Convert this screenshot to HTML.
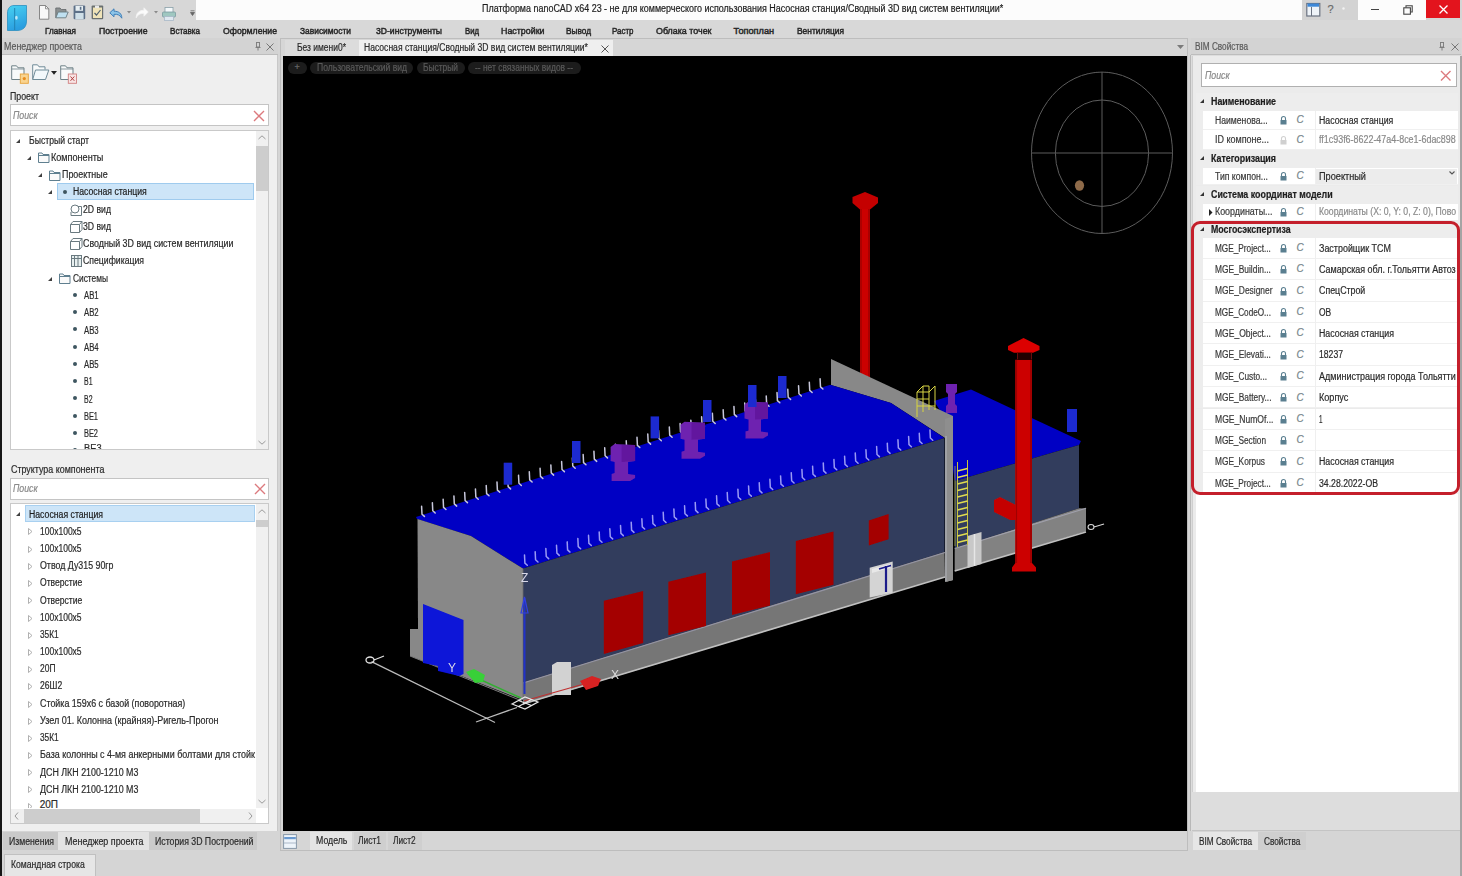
<!DOCTYPE html>
<html><head><meta charset="utf-8">
<style>
*{box-sizing:border-box;margin:0;padding:0}
html,body{width:1462px;height:876px;overflow:hidden;background:#d5d5d5;font-family:"Liberation Sans",sans-serif;color:#333}
.a{position:absolute}
.t{position:absolute;white-space:nowrap;line-height:1;transform-origin:0 50%;-webkit-text-stroke:0.2px currentColor}
svg{position:absolute;overflow:visible}
</style></head><body><div id="wrap" style="position:absolute;left:0;top:0;width:1462px;height:876px">
<div class="a" style="left:0px;top:0px;width:196px;height:20px;background:#d7d7d7;"></div>
<div class="a" style="left:196px;top:0px;width:1106px;height:20px;background:#fcfcfc;"></div>
<div class="a" style="left:1302px;top:0px;width:56px;height:20px;background:#d3d3d3;"></div>
<div class="a" style="left:1358px;top:0px;width:68px;height:20px;background:#fcfcfc;"></div>
<div class="a" style="left:1426px;top:0px;width:34px;height:18px;background:#e3141d;"></div>
<div class="a" style="left:0px;top:20px;width:1462px;height:18px;background:#d8d8d8;"></div>
<div class="a" style="left:0px;top:0px;width:2px;height:876px;background:#161616;"></div>
<div class="a" style="left:2px;top:38px;width:276px;height:17px;background:#d3d3d3;"></div>
<div class="a" style="left:2px;top:53.5px;width:276px;height:1.5px;background:#bdbdbd;"></div>
<div class="a" style="left:2px;top:55px;width:275px;height:776px;background:#efefef;"></div>
<div class="a" style="left:277px;top:55px;width:1px;height:776px;background:#c8c8c8;"></div>
<div class="a" style="left:9.5px;top:104px;width:259.0px;height:22px;background:#fff;border:1px solid #c4c4c4;"></div>
<div class="a" style="left:9.5px;top:129.5px;width:259px;height:320.5px;background:#fff;border:1px solid #c9c9c9;"></div>
<div class="a" style="left:256px;top:131px;width:12px;height:318px;background:#f0f0f0;"></div>
<div class="a" style="left:256px;top:145.5px;width:12px;height:45px;background:#cdcdcd;"></div>
<div class="a" style="left:9.5px;top:478px;width:259.0px;height:22px;background:#fff;border:1px solid #c4c4c4;"></div>
<div class="a" style="left:9.5px;top:503px;width:259px;height:321px;background:#fff;border:1px solid #c9c9c9;"></div>
<div class="a" style="left:256px;top:504px;width:12px;height:304px;background:#f0f0f0;"></div>
<div class="a" style="left:256px;top:519.5px;width:12px;height:7.5px;background:#cdcdcd;"></div>
<div class="a" style="left:10.5px;top:809px;width:245.5px;height:14px;background:#f0f0f0;"></div>
<div class="a" style="left:23.5px;top:809px;width:176px;height:14px;background:#cdcdcd;"></div>
<div class="a" style="left:280px;top:38px;width:908px;height:813px;background:#d6d6d6;border:1px solid #bdbdbd;"></div>
<div class="a" style="left:285px;top:39.5px;width:74px;height:16.5px;background:#dcdcdc;"></div>
<div class="a" style="left:359px;top:39.5px;width:253.5px;height:16.5px;background:#efefef;"></div>
<div class="a" style="left:283px;top:56px;width:904px;height:775px;background:#000;"></div>
<div class="a" style="left:309.7px;top:832px;width:42.7px;height:18px;background:#e4e4e4;"></div>
<div class="a" style="left:353.8px;top:832px;width:32.4px;height:18px;background:#cfcfcf;"></div>
<div class="a" style="left:387.6px;top:832px;width:34px;height:18px;background:#cfcfcf;"></div>
<div class="a" style="left:1191px;top:38px;width:270px;height:17px;background:#d3d3d3;"></div>
<div class="a" style="left:1191px;top:53.5px;width:270px;height:1.5px;background:#bdbdbd;"></div>
<div class="a" style="left:1190px;top:55px;width:271px;height:776px;background:#dddddd;border-left:1px solid #b8b8b8;"></div>
<div class="a" style="left:1192px;top:56px;width:268px;height:736px;background:#ebebeb;border-left:1px solid #cfcfcf;"></div>
<div class="a" style="left:1195.5px;top:493px;width:262.5px;height:299px;background:#fff;"></div>
<div class="a" style="left:1200.5px;top:62.5px;width:256px;height:24px;background:#fff;border:1.5px solid #b0b0b0;"></div>
<div class="a" style="left:1460px;top:56px;width:2px;height:820px;background:#a4a4a4;"></div>
<div class="a" style="left:1192px;top:830px;width:268px;height:1px;background:#c4c4c4;"></div>
<div class="a" style="left:3px;top:832px;width:55px;height:18px;background:#c9c9c9;"></div>
<div class="a" style="left:58px;top:832px;width:90.5px;height:18px;background:#e3e3e3;"></div>
<div class="a" style="left:148.5px;top:832px;width:108.5px;height:18px;background:#cacaca;"></div>
<div class="a" style="left:4px;top:853.5px;width:91.5px;height:23px;background:#e6e6e6;border:1px solid #c0c0c0;"></div>
<div class="a" style="left:1193.3px;top:832px;width:64.7px;height:18px;background:#e6e6e6;"></div>
<div class="a" style="left:1258px;top:832px;width:48px;height:18px;background:#cfcfcf;"></div>
<svg style="left:16.4px;top:138.7px" width="4" height="4"><polygon points="4,0 4,4 0,4" fill="#404040"/></svg>
<svg style="left:27.0px;top:156.0px" width="4" height="4"><polygon points="4,0 4,4 0,4" fill="#404040"/></svg>
<svg style="left:38px;top:152px" width="12" height="11"><path d="M0.5,10.5 V1 H4 L5,2.5 H11 V10.5 Z M0.5,3.5 H11" fill="#fafafa" stroke="#5f7f8f" stroke-width="1"/></svg>
<svg style="left:37.8px;top:173.0px" width="4" height="4"><polygon points="4,0 4,4 0,4" fill="#404040"/></svg>
<svg style="left:48.5px;top:169.5px" width="12" height="11"><path d="M0.5,10.5 V1 H4 L5,2.5 H11 V10.5 Z M0.5,3.5 H11" fill="#fafafa" stroke="#5f7f8f" stroke-width="1"/></svg>
<svg style="left:48.0px;top:190.0px" width="4" height="4"><polygon points="4,0 4,4 0,4" fill="#404040"/></svg>
<div class="a" style="left:57.2px;top:182.5px;width:197px;height:17.5px;background:#cde5f8;border:1px solid #9fcbee;"></div>
<svg style="left:63px;top:189.7px" width="4" height="4"><circle cx="2" cy="2" r="2" fill="#3e5660"/></svg>
<svg style="left:69.5px;top:204px" width="13" height="12"><circle cx="5" cy="5" r="4" fill="#fff" stroke="#6a7a80"/><path d="M1,8 V11.5 H11.5 V2.5 H8" fill="none" stroke="#6a7a80"/></svg>
<svg style="left:69.5px;top:221px" width="13" height="12"><path d="M0.5,3.5 H9.5 V11.5 H0.5 Z M0.5,3.5 L3,0.5 H12 V8.5 L9.5,11.5 M9.5,3.5 L12,0.5" fill="#fff" stroke="#6a7a80"/></svg>
<svg style="left:69.5px;top:238px" width="13" height="12"><path d="M0.5,3.5 H9.5 V11.5 H0.5 Z M0.5,3.5 L3,0.5 H12 V8.5 L9.5,11.5 M9.5,3.5 L12,0.5" fill="#fff" stroke="#6a7a80"/></svg>
<svg style="left:70.5px;top:255px" width="11" height="12"><rect x="0.5" y="0.5" width="10" height="11" fill="#e8f0f0" stroke="#6a7a80"/><path d="M3.5,0.5 V11.5 M7,0.5 V11.5 M0.5,3.5 H10.5" stroke="#6a7a80"/></svg>
<svg style="left:48.0px;top:276.5px" width="4" height="4"><polygon points="4,0 4,4 0,4" fill="#404040"/></svg>
<svg style="left:59px;top:273px" width="12" height="11"><path d="M0.5,10.5 V1 H4 L5,2.5 H11 V10.5 Z M0.5,3.5 H11" fill="#fafafa" stroke="#5f7f8f" stroke-width="1"/></svg>
<svg style="left:73.4px;top:293.3px" width="4" height="4"><circle cx="2" cy="2" r="2" fill="#3e5660"/></svg>
<svg style="left:73.4px;top:310.3px" width="4" height="4"><circle cx="2" cy="2" r="2" fill="#3e5660"/></svg>
<svg style="left:73.4px;top:327.4px" width="4" height="4"><circle cx="2" cy="2" r="2" fill="#3e5660"/></svg>
<svg style="left:73.4px;top:344.6px" width="4" height="4"><circle cx="2" cy="2" r="2" fill="#3e5660"/></svg>
<svg style="left:73.4px;top:361.6px" width="4" height="4"><circle cx="2" cy="2" r="2" fill="#3e5660"/></svg>
<svg style="left:73.4px;top:379px" width="4" height="4"><circle cx="2" cy="2" r="2" fill="#3e5660"/></svg>
<svg style="left:73.4px;top:396.4px" width="4" height="4"><circle cx="2" cy="2" r="2" fill="#3e5660"/></svg>
<svg style="left:73.4px;top:413.6px" width="4" height="4"><circle cx="2" cy="2" r="2" fill="#3e5660"/></svg>
<svg style="left:73.4px;top:431px" width="4" height="4"><circle cx="2" cy="2" r="2" fill="#3e5660"/></svg>
<div class="a" style="left:10px;top:443px;width:245px;height:5.5px;overflow:hidden"><svg style="left:63.4px;top:4.6px" width="4" height="4"><circle cx="2" cy="2" r="2" fill="#3e5660"/></svg><div class="t" style="left:73.5px;top:1.3px;font-size:10px;color:#2b2b2b;transform:scaleX(0.93)">ВЕ3</div></div>
<svg style="left:258px;top:135px" width="8" height="5"><path d="M0.5,4 L4,0.8 L7.5,4" fill="none" stroke="#9a9a9a"/></svg>
<svg style="left:258px;top:440px" width="8" height="5"><path d="M0.5,1 L4,4.2 L7.5,1" fill="none" stroke="#9a9a9a"/></svg>
<svg style="left:253.2px;top:109.6px" width="12" height="12"><path d="M1,1 L11,11 M11,1 L1,11" stroke="#dc7a7e" stroke-width="1.4"/></svg>
<svg style="left:253.5px;top:483px" width="12" height="12"><path d="M1,1 L11,11 M11,1 L1,11" stroke="#dc7a7e" stroke-width="1.4"/></svg>
<svg style="left:15.899999999999999px;top:511.79999999999995px" width="4" height="4"><polygon points="4,0 4,4 0,4" fill="#404040"/></svg>
<div class="a" style="left:25.2px;top:504.6px;width:229.5px;height:17px;background:#cde5f8;border:1px solid #a8d0f0;"></div>
<svg style="left:27.5px;top:528.3px" width="5" height="7"><polygon points="0.5,0.5 4,3.5 0.5,6.5" fill="none" stroke="#a8a8a8" stroke-width="0.9"/></svg>
<svg style="left:27.5px;top:545.5px" width="5" height="7"><polygon points="0.5,0.5 4,3.5 0.5,6.5" fill="none" stroke="#a8a8a8" stroke-width="0.9"/></svg>
<svg style="left:27.5px;top:562.8px" width="5" height="7"><polygon points="0.5,0.5 4,3.5 0.5,6.5" fill="none" stroke="#a8a8a8" stroke-width="0.9"/></svg>
<svg style="left:27.5px;top:579.8px" width="5" height="7"><polygon points="0.5,0.5 4,3.5 0.5,6.5" fill="none" stroke="#a8a8a8" stroke-width="0.9"/></svg>
<svg style="left:27.5px;top:597.3px" width="5" height="7"><polygon points="0.5,0.5 4,3.5 0.5,6.5" fill="none" stroke="#a8a8a8" stroke-width="0.9"/></svg>
<svg style="left:27.5px;top:614.6px" width="5" height="7"><polygon points="0.5,0.5 4,3.5 0.5,6.5" fill="none" stroke="#a8a8a8" stroke-width="0.9"/></svg>
<svg style="left:27.5px;top:631.5px" width="5" height="7"><polygon points="0.5,0.5 4,3.5 0.5,6.5" fill="none" stroke="#a8a8a8" stroke-width="0.9"/></svg>
<svg style="left:27.5px;top:648.7px" width="5" height="7"><polygon points="0.5,0.5 4,3.5 0.5,6.5" fill="none" stroke="#a8a8a8" stroke-width="0.9"/></svg>
<svg style="left:27.5px;top:665.7px" width="5" height="7"><polygon points="0.5,0.5 4,3.5 0.5,6.5" fill="none" stroke="#a8a8a8" stroke-width="0.9"/></svg>
<svg style="left:27.5px;top:683px" width="5" height="7"><polygon points="0.5,0.5 4,3.5 0.5,6.5" fill="none" stroke="#a8a8a8" stroke-width="0.9"/></svg>
<svg style="left:27.5px;top:700.8px" width="5" height="7"><polygon points="0.5,0.5 4,3.5 0.5,6.5" fill="none" stroke="#a8a8a8" stroke-width="0.9"/></svg>
<svg style="left:27.5px;top:717.8px" width="5" height="7"><polygon points="0.5,0.5 4,3.5 0.5,6.5" fill="none" stroke="#a8a8a8" stroke-width="0.9"/></svg>
<svg style="left:27.5px;top:734.8px" width="5" height="7"><polygon points="0.5,0.5 4,3.5 0.5,6.5" fill="none" stroke="#a8a8a8" stroke-width="0.9"/></svg>
<svg style="left:27.5px;top:751.8px" width="5" height="7"><polygon points="0.5,0.5 4,3.5 0.5,6.5" fill="none" stroke="#a8a8a8" stroke-width="0.9"/></svg>
<svg style="left:27.5px;top:769.2px" width="5" height="7"><polygon points="0.5,0.5 4,3.5 0.5,6.5" fill="none" stroke="#a8a8a8" stroke-width="0.9"/></svg>
<svg style="left:27.5px;top:786.2px" width="5" height="7"><polygon points="0.5,0.5 4,3.5 0.5,6.5" fill="none" stroke="#a8a8a8" stroke-width="0.9"/></svg>
<div class="a" style="left:10px;top:799px;width:245px;height:9px;overflow:hidden"><svg style="left:17.5px;top:3.7px" width="5" height="7"><polygon points="0.5,0.5 4,3.5 0.5,6.5" fill="none" stroke="#a8a8a8" stroke-width="0.9"/></svg><div class="t" style="left:29.7px;top:1.4px;font-size:10px;color:#2b2b2b">20П</div></div>
<svg style="left:258px;top:509px" width="8" height="5"><path d="M0.5,4 L4,0.8 L7.5,4" fill="none" stroke="#9a9a9a"/></svg>
<svg style="left:258px;top:799px" width="8" height="5"><path d="M0.5,1 L4,4.2 L7.5,1" fill="none" stroke="#9a9a9a"/></svg>
<svg style="left:14px;top:812px" width="5" height="8"><path d="M4,0.5 L1,4 L4,7.5" fill="none" stroke="#9a9a9a"/></svg>
<svg style="left:248px;top:812px" width="5" height="8"><path d="M1,0.5 L4,4 L1,7.5" fill="none" stroke="#9a9a9a"/></svg>
<div class="a" style="left:1196px;top:92.9px;width:262px;height:18px;background:#ededed;"></div>
<svg style="left:1199.5px;top:99.4px" width="4" height="4"><polygon points="4,0 4,4 0,4" fill="#333"/></svg>
<div class="a" style="left:1196px;top:111px;width:7px;height:19px;background:#ededed;"></div>
<div class="a" style="left:1203px;top:111px;width:255px;height:19px;background:#ffffff;border-bottom:1px solid #f0f0f0;"></div>
<div class="a" style="left:1314.5px;top:111px;width:1px;height:19px;background:#efefef;"></div>
<svg style="left:1280px;top:116.0px" width="7" height="9"><path d="M1.5,4 V2.5 A2,2 0 0 1 5.5,2.5 V4" fill="none" stroke="#5a7f90" stroke-width="1.1"/><rect x="0.5" y="4" width="6" height="4.5" fill="#5a7f90"/></svg>
<div class="t" style="left:1296.5px;top:115.2px;font-size:10px;font-style:italic;color:#74848a">C</div>
<div class="a" style="left:1196px;top:130px;width:7px;height:20px;background:#ededed;"></div>
<div class="a" style="left:1203px;top:130px;width:255px;height:20px;background:#ffffff;border-bottom:1px solid #f0f0f0;"></div>
<div class="a" style="left:1314.5px;top:130px;width:1px;height:20px;background:#efefef;"></div>
<svg style="left:1280px;top:135.5px" width="7" height="9"><path d="M1.5,4 V2.5 A2,2 0 0 1 5.5,2.5 V4" fill="none" stroke="#d0d0d0" stroke-width="1.1"/><rect x="0.5" y="4" width="6" height="4.5" fill="#d0d0d0"/></svg>
<div class="t" style="left:1296.5px;top:134.7px;font-size:10px;font-style:italic;color:#74848a">C</div>
<div class="a" style="left:1196px;top:149.7px;width:262px;height:18px;background:#ededed;"></div>
<svg style="left:1199.5px;top:156.2px" width="4" height="4"><polygon points="4,0 4,4 0,4" fill="#333"/></svg>
<div class="a" style="left:1196px;top:167.5px;width:7px;height:17.5px;background:#ededed;"></div>
<div class="a" style="left:1203px;top:167.5px;width:255px;height:17.5px;background:#ffffff;border-bottom:1px solid #f0f0f0;"></div>
<div class="a" style="left:1314.5px;top:167.5px;width:1px;height:17.5px;background:#efefef;"></div>
<div class="a" style="left:1315.5px;top:168.5px;width:141.5px;height:15.5px;background:#ececec;"></div>
<svg style="left:1280px;top:171.75px" width="7" height="9"><path d="M1.5,4 V2.5 A2,2 0 0 1 5.5,2.5 V4" fill="none" stroke="#5a7f90" stroke-width="1.1"/><rect x="0.5" y="4" width="6" height="4.5" fill="#5a7f90"/></svg>
<div class="t" style="left:1296.5px;top:170.95px;font-size:10px;font-style:italic;color:#74848a">C</div>
<svg style="left:1448.5px;top:171px" width="6" height="4"><path d="M0.5,0.5 L3,3 L5.5,0.5" fill="none" stroke="#555" stroke-width="1.1"/></svg>
<div class="a" style="left:1196px;top:185.5px;width:262px;height:18px;background:#ededed;"></div>
<svg style="left:1199.5px;top:192.0px" width="4" height="4"><polygon points="4,0 4,4 0,4" fill="#333"/></svg>
<div class="a" style="left:1196px;top:203.5px;width:7px;height:17.0px;background:#ededed;"></div>
<div class="a" style="left:1203px;top:203.5px;width:255px;height:17.0px;background:#ffffff;border-bottom:1px solid #f0f0f0;"></div>
<div class="a" style="left:1314.5px;top:203.5px;width:1px;height:17.0px;background:#efefef;"></div>
<svg style="left:1208.5px;top:208.5px" width="4" height="7"><polygon points="0,0 3.5,3.5 0,7" fill="#222"/></svg>
<svg style="left:1280px;top:207.5px" width="7" height="9"><path d="M1.5,4 V2.5 A2,2 0 0 1 5.5,2.5 V4" fill="none" stroke="#5a7f90" stroke-width="1.1"/><rect x="0.5" y="4" width="6" height="4.5" fill="#5a7f90"/></svg>
<div class="t" style="left:1296.5px;top:206.7px;font-size:10px;font-style:italic;color:#74848a">C</div>
<div class="a" style="left:1196px;top:220.4px;width:262px;height:18px;background:#ededed;"></div>
<svg style="left:1199.5px;top:226.9px" width="4" height="4"><polygon points="4,0 4,4 0,4" fill="#333"/></svg>
<div class="a" style="left:1196px;top:237.7px;width:7px;height:21.350000000000023px;background:#ededed;"></div>
<div class="a" style="left:1203px;top:237.7px;width:255px;height:21.350000000000023px;background:#ffffff;border-bottom:1px solid #f0f0f0;"></div>
<div class="a" style="left:1314.5px;top:237.7px;width:1px;height:21.350000000000023px;background:#efefef;"></div>
<svg style="left:1280px;top:243.875px" width="7" height="9"><path d="M1.5,4 V2.5 A2,2 0 0 1 5.5,2.5 V4" fill="none" stroke="#5a7f90" stroke-width="1.1"/><rect x="0.5" y="4" width="6" height="4.5" fill="#5a7f90"/></svg>
<div class="t" style="left:1296.5px;top:243.075px;font-size:10px;font-style:italic;color:#74848a">C</div>
<div class="a" style="left:1196px;top:259.05px;width:7px;height:21.350000000000023px;background:#ededed;"></div>
<div class="a" style="left:1203px;top:259.05px;width:255px;height:21.350000000000023px;background:#ffffff;border-bottom:1px solid #f0f0f0;"></div>
<div class="a" style="left:1314.5px;top:259.05px;width:1px;height:21.350000000000023px;background:#efefef;"></div>
<svg style="left:1280px;top:265.225px" width="7" height="9"><path d="M1.5,4 V2.5 A2,2 0 0 1 5.5,2.5 V4" fill="none" stroke="#5a7f90" stroke-width="1.1"/><rect x="0.5" y="4" width="6" height="4.5" fill="#5a7f90"/></svg>
<div class="t" style="left:1296.5px;top:264.425px;font-size:10px;font-style:italic;color:#74848a">C</div>
<div class="a" style="left:1196px;top:280.4px;width:7px;height:21.350000000000023px;background:#ededed;"></div>
<div class="a" style="left:1203px;top:280.4px;width:255px;height:21.350000000000023px;background:#ffffff;border-bottom:1px solid #f0f0f0;"></div>
<div class="a" style="left:1314.5px;top:280.4px;width:1px;height:21.350000000000023px;background:#efefef;"></div>
<svg style="left:1280px;top:286.575px" width="7" height="9"><path d="M1.5,4 V2.5 A2,2 0 0 1 5.5,2.5 V4" fill="none" stroke="#5a7f90" stroke-width="1.1"/><rect x="0.5" y="4" width="6" height="4.5" fill="#5a7f90"/></svg>
<div class="t" style="left:1296.5px;top:285.775px;font-size:10px;font-style:italic;color:#74848a">C</div>
<div class="a" style="left:1196px;top:301.75px;width:7px;height:21.350000000000023px;background:#ededed;"></div>
<div class="a" style="left:1203px;top:301.75px;width:255px;height:21.350000000000023px;background:#ffffff;border-bottom:1px solid #f0f0f0;"></div>
<div class="a" style="left:1314.5px;top:301.75px;width:1px;height:21.350000000000023px;background:#efefef;"></div>
<svg style="left:1280px;top:307.925px" width="7" height="9"><path d="M1.5,4 V2.5 A2,2 0 0 1 5.5,2.5 V4" fill="none" stroke="#5a7f90" stroke-width="1.1"/><rect x="0.5" y="4" width="6" height="4.5" fill="#5a7f90"/></svg>
<div class="t" style="left:1296.5px;top:307.125px;font-size:10px;font-style:italic;color:#74848a">C</div>
<div class="a" style="left:1196px;top:323.1px;width:7px;height:21.350000000000023px;background:#ededed;"></div>
<div class="a" style="left:1203px;top:323.1px;width:255px;height:21.350000000000023px;background:#ffffff;border-bottom:1px solid #f0f0f0;"></div>
<div class="a" style="left:1314.5px;top:323.1px;width:1px;height:21.350000000000023px;background:#efefef;"></div>
<svg style="left:1280px;top:329.27500000000003px" width="7" height="9"><path d="M1.5,4 V2.5 A2,2 0 0 1 5.5,2.5 V4" fill="none" stroke="#5a7f90" stroke-width="1.1"/><rect x="0.5" y="4" width="6" height="4.5" fill="#5a7f90"/></svg>
<div class="t" style="left:1296.5px;top:328.475px;font-size:10px;font-style:italic;color:#74848a">C</div>
<div class="a" style="left:1196px;top:344.45px;width:7px;height:21.350000000000023px;background:#ededed;"></div>
<div class="a" style="left:1203px;top:344.45px;width:255px;height:21.350000000000023px;background:#ffffff;border-bottom:1px solid #f0f0f0;"></div>
<div class="a" style="left:1314.5px;top:344.45px;width:1px;height:21.350000000000023px;background:#efefef;"></div>
<svg style="left:1280px;top:350.625px" width="7" height="9"><path d="M1.5,4 V2.5 A2,2 0 0 1 5.5,2.5 V4" fill="none" stroke="#5a7f90" stroke-width="1.1"/><rect x="0.5" y="4" width="6" height="4.5" fill="#5a7f90"/></svg>
<div class="t" style="left:1296.5px;top:349.825px;font-size:10px;font-style:italic;color:#74848a">C</div>
<div class="a" style="left:1196px;top:365.8px;width:7px;height:21.350000000000023px;background:#ededed;"></div>
<div class="a" style="left:1203px;top:365.8px;width:255px;height:21.350000000000023px;background:#ffffff;border-bottom:1px solid #f0f0f0;"></div>
<div class="a" style="left:1314.5px;top:365.8px;width:1px;height:21.350000000000023px;background:#efefef;"></div>
<svg style="left:1280px;top:371.975px" width="7" height="9"><path d="M1.5,4 V2.5 A2,2 0 0 1 5.5,2.5 V4" fill="none" stroke="#5a7f90" stroke-width="1.1"/><rect x="0.5" y="4" width="6" height="4.5" fill="#5a7f90"/></svg>
<div class="t" style="left:1296.5px;top:371.175px;font-size:10px;font-style:italic;color:#74848a">C</div>
<div class="a" style="left:1196px;top:387.15px;width:7px;height:21.350000000000023px;background:#ededed;"></div>
<div class="a" style="left:1203px;top:387.15px;width:255px;height:21.350000000000023px;background:#ffffff;border-bottom:1px solid #f0f0f0;"></div>
<div class="a" style="left:1314.5px;top:387.15px;width:1px;height:21.350000000000023px;background:#efefef;"></div>
<svg style="left:1280px;top:393.325px" width="7" height="9"><path d="M1.5,4 V2.5 A2,2 0 0 1 5.5,2.5 V4" fill="none" stroke="#5a7f90" stroke-width="1.1"/><rect x="0.5" y="4" width="6" height="4.5" fill="#5a7f90"/></svg>
<div class="t" style="left:1296.5px;top:392.525px;font-size:10px;font-style:italic;color:#74848a">C</div>
<div class="a" style="left:1196px;top:408.5px;width:7px;height:21.350000000000023px;background:#ededed;"></div>
<div class="a" style="left:1203px;top:408.5px;width:255px;height:21.350000000000023px;background:#ffffff;border-bottom:1px solid #f0f0f0;"></div>
<div class="a" style="left:1314.5px;top:408.5px;width:1px;height:21.350000000000023px;background:#efefef;"></div>
<svg style="left:1280px;top:414.675px" width="7" height="9"><path d="M1.5,4 V2.5 A2,2 0 0 1 5.5,2.5 V4" fill="none" stroke="#5a7f90" stroke-width="1.1"/><rect x="0.5" y="4" width="6" height="4.5" fill="#5a7f90"/></svg>
<div class="t" style="left:1296.5px;top:413.875px;font-size:10px;font-style:italic;color:#74848a">C</div>
<div class="a" style="left:1196px;top:429.85px;width:7px;height:21.350000000000023px;background:#ededed;"></div>
<div class="a" style="left:1203px;top:429.85px;width:255px;height:21.350000000000023px;background:#ffffff;border-bottom:1px solid #f0f0f0;"></div>
<div class="a" style="left:1314.5px;top:429.85px;width:1px;height:21.350000000000023px;background:#efefef;"></div>
<svg style="left:1280px;top:436.02500000000003px" width="7" height="9"><path d="M1.5,4 V2.5 A2,2 0 0 1 5.5,2.5 V4" fill="none" stroke="#5a7f90" stroke-width="1.1"/><rect x="0.5" y="4" width="6" height="4.5" fill="#5a7f90"/></svg>
<div class="t" style="left:1296.5px;top:435.225px;font-size:10px;font-style:italic;color:#74848a">C</div>
<div class="a" style="left:1196px;top:451.2px;width:7px;height:21.350000000000023px;background:#ededed;"></div>
<div class="a" style="left:1203px;top:451.2px;width:255px;height:21.350000000000023px;background:#ffffff;border-bottom:1px solid #f0f0f0;"></div>
<div class="a" style="left:1314.5px;top:451.2px;width:1px;height:21.350000000000023px;background:#efefef;"></div>
<svg style="left:1280px;top:457.375px" width="7" height="9"><path d="M1.5,4 V2.5 A2,2 0 0 1 5.5,2.5 V4" fill="none" stroke="#5a7f90" stroke-width="1.1"/><rect x="0.5" y="4" width="6" height="4.5" fill="#5a7f90"/></svg>
<div class="t" style="left:1296.5px;top:456.575px;font-size:10px;font-style:italic;color:#74848a">C</div>
<div class="a" style="left:1196px;top:472.55px;width:7px;height:21.350000000000023px;background:#ededed;"></div>
<div class="a" style="left:1203px;top:472.55px;width:255px;height:21.350000000000023px;background:#ffffff;border-bottom:1px solid #f0f0f0;"></div>
<div class="a" style="left:1314.5px;top:472.55px;width:1px;height:21.350000000000023px;background:#efefef;"></div>
<svg style="left:1280px;top:478.725px" width="7" height="9"><path d="M1.5,4 V2.5 A2,2 0 0 1 5.5,2.5 V4" fill="none" stroke="#5a7f90" stroke-width="1.1"/><rect x="0.5" y="4" width="6" height="4.5" fill="#5a7f90"/></svg>
<div class="t" style="left:1296.5px;top:477.925px;font-size:10px;font-style:italic;color:#74848a">C</div>
<div class="a" style="left:1190.8px;top:220.5px;width:269.4px;height:274.8px;border:3.5px solid #c41f2b;border-radius:9px"></div>
<svg style="left:1439px;top:42px" width="6" height="9"><path d="M1,0.5 H5 M1.5,0.5 V5 H4.5 V0.5 M0.5,5.5 H5.5 M3,5.5 V8.5" fill="none" stroke="#777" stroke-width="0.9"/></svg>
<svg style="left:1450.5px;top:43px" width="8" height="8"><path d="M0.5,0.5 L7.5,7.5 M7.5,0.5 L0.5,7.5" stroke="#777" stroke-width="1"/></svg>
<svg style="left:254.5px;top:42px" width="6" height="9"><path d="M1,0.5 H5 M1.5,0.5 V5 H4.5 V0.5 M0.5,5.5 H5.5 M3,5.5 V8.5" fill="none" stroke="#777" stroke-width="0.9"/></svg>
<svg style="left:266px;top:43px" width="8" height="8"><path d="M0.5,0.5 L7.5,7.5 M7.5,0.5 L0.5,7.5" stroke="#777" stroke-width="1"/></svg>
<svg style="left:1440px;top:69.5px" width="11.5" height="11.5"><path d="M1,1 L10.5,10.5 M10.5,1 L1,10.5" stroke="#dc7a7e" stroke-width="1.4"/></svg>
<div class="a" style="left:283px;top:56px;width:904px;height:775px;overflow:hidden"><svg style="left:-283px;top:-56px" width="1462" height="876" viewBox="0 0 1462 876"><defs><linearGradient id="pg" x1="0" y1="0" x2="1" y2="0"><stop offset="0" stop-color="#a80404"/><stop offset="0.35" stop-color="#d40808"/><stop offset="0.7" stop-color="#c80606"/><stop offset="1" stop-color="#9a0404"/></linearGradient><filter id="sb" x="0" y="0" width="1462" height="876" filterUnits="userSpaceOnUse"><feGaussianBlur stdDeviation="0.55"/></filter></defs><g filter="url(#sb)"><rect x="283" y="56" width="904" height="775" fill="#000"/><polygon points="852.5,197 865,192 878,197.5 878,203 870,209.5 860,209.5 852.5,203" fill="#c40606" /><polygon points="860,209 870,209 870,378 860,378" fill="#cc0606" /><line x1="861" y1="209" x2="861" y2="378" stroke="#a00404" stroke-width="1.4" /><line x1="869" y1="209" x2="869" y2="378" stroke="#9a0404" stroke-width="1.4" /><polygon points="934,401 971,389.5 1081,441 1079,445 954.7,481 946,420" fill="#0000c4" /><polygon points="954.7,481 1079,445 1079,508.3 954.7,548.5" fill="#333d5d" /><polygon points="954.7,548.5 1079,508.3 1086,508.5 1086,531.6 954.7,571" fill="#828282" /><line x1="954.7" y1="548.5" x2="1086" y2="508.3" stroke="#a0a0ac" stroke-width="1.2" /><line x1="954.7" y1="571" x2="1086" y2="532" stroke="#c0c0c0" stroke-width="1.5" /><polygon points="946,384 957,384 957,392 955,394 955,404 957,406 957,413 946,413 946,406 948,404 948,394 946,392" fill="#6e22b0" /><polygon points="1067,409 1077,409 1077,432 1067,432" fill="#1a2ad0" /><polygon points="1015.3,359.8 1032,359.8 1032,563 1036,567.5 1036,571.5 1012,571.5 1012,567.5 1015.3,563" fill="#cc0606" /><line x1="1016.3" y1="360" x2="1016.3" y2="563" stroke="#a00404" stroke-width="1.6" /><line x1="1031" y1="360" x2="1031" y2="563" stroke="#980404" stroke-width="1.6" /><polygon points="994,500 1000,497 1016,505 1016,520 1010,520 994,512" fill="#c40606" /><polygon points="1023.5,338 1039.5,346 1039.5,350 1033,352.8 1014,352.8 1008,350 1008,346" fill="#dc0404" /><polygon points="1017,352.8 1032,352.8 1032,359.8 1017,359.8" fill="#220202" /><line x1="1017.5" y1="353" x2="1017.5" y2="359.5" stroke="#7a1010" stroke-width="0.8" /><line x1="1031.5" y1="353" x2="1031.5" y2="359.5" stroke="#7a1010" stroke-width="0.8" /><polygon points="967.5,536 981.5,532 981.5,564 967.5,568" fill="#c8c8c8" /><line x1="974.5" y1="534" x2="974.5" y2="566" stroke="#e6e6e6" stroke-width="1.5" /><line x1="957.5" y1="462" x2="957.5" y2="547" stroke="#c8c43a" stroke-width="1" /><line x1="967.5" y1="460" x2="967.5" y2="545" stroke="#c8c43a" stroke-width="1" /><line x1="957.5" y1="471.0" x2="967.5" y2="468.5" stroke="#e0dc50" stroke-width="1.6" /><line x1="957.5" y1="477.5" x2="967.5" y2="475.0" stroke="#e0dc50" stroke-width="1.6" /><line x1="957.5" y1="484.0" x2="967.5" y2="481.5" stroke="#e0dc50" stroke-width="1.6" /><line x1="957.5" y1="490.5" x2="967.5" y2="488.0" stroke="#e0dc50" stroke-width="1.6" /><line x1="957.5" y1="497.0" x2="967.5" y2="494.5" stroke="#e0dc50" stroke-width="1.6" /><line x1="957.5" y1="503.5" x2="967.5" y2="501.0" stroke="#e0dc50" stroke-width="1.6" /><line x1="957.5" y1="510.0" x2="967.5" y2="507.5" stroke="#e0dc50" stroke-width="1.6" /><line x1="957.5" y1="516.5" x2="967.5" y2="514.0" stroke="#e0dc50" stroke-width="1.6" /><line x1="957.5" y1="523.0" x2="967.5" y2="520.5" stroke="#e0dc50" stroke-width="1.6" /><line x1="957.5" y1="529.5" x2="967.5" y2="527.0" stroke="#e0dc50" stroke-width="1.6" /><line x1="957.5" y1="536.0" x2="967.5" y2="533.5" stroke="#e0dc50" stroke-width="1.6" /><line x1="957.5" y1="542.5" x2="967.5" y2="540.0" stroke="#e0dc50" stroke-width="1.6" /><line x1="955" y1="466" x2="955" y2="546" stroke="#a8a840" stroke-width="0.8" /><polygon points="831,359 953,416 953,580 945,582 945,438 891,403 831,385" fill="#888888" /><polygon points="945,419 953,416 953,580 945,582" fill="#8e8e8e" /><g stroke="#d8d440" stroke-width="1" fill="none"><path d="M917,417 V392 L923,386 H929 V410 M923,386 V412 M929,392 L935,386 V410 M917,392 H929 M917,399 H929 M917,406 H935"/></g><polygon points="416,517 829.5,385 831,385 891,403 944.5,438 523,568.5 471,536 417,519" fill="#0000c4" /><polygon points="523,568.5 944.5,438 944.5,552 523,682.5" fill="#333d5d" /><polygon points="523,682.5 944.5,552 945,577 523,704.5" fill="#767676" /><line x1="523" y1="683" x2="945" y2="552.5" stroke="#9494a4" stroke-width="1.3" /><line x1="523" y1="704" x2="945" y2="577" stroke="#c0c0c0" stroke-width="1.6" /><polygon points="417.5,519 471,536 523,568.5 523,700 410,656 410,629 418,629" fill="#888888" /><line x1="410" y1="656" x2="522" y2="701" stroke="#7a7a7a" stroke-width="1" /><line x1="523" y1="568.5" x2="523" y2="700" stroke="#6c6c6c" stroke-width="0.8" /><polygon points="423,604 463.5,620 463.5,674 459,676 438,671 438,666 423,663" fill="#0a12d8" /><polygon points="603.8,600.7 643.2,591 643.2,643 603.8,654" fill="#a40000" /><polygon points="668.3,581.8 706,572.4 706,625.9 668.3,635.3" fill="#a40000" /><polygon points="732,561.4 770,552 770,605.6 732,615.0" fill="#a40000" /><polygon points="795.8,541 833.5,531.5 833.5,584.7 795.8,594.2" fill="#a40000" /><polygon points="868.8,520.5 888.6,514 888.6,539.3 868.8,545.6" fill="#a40000" /><polygon points="869.7,567.7 892.7,561.4 892.7,592.8 869.7,597.5" fill="#d4d4d4" /><polygon points="872,569 890,564 890,568 872,573" fill="#e8e8e8" /><line x1="886" y1="566" x2="886" y2="592" stroke="#1a1a8a" stroke-width="2.2" /><line x1="879" y1="569" x2="891" y2="565.5" stroke="#1a1a8a" stroke-width="1.6" /><polygon points="945,438 953,434 953,580 945,582" fill="#8e8e8e" /><line x1="946" y1="436" x2="946" y2="581" stroke="#a4a6aa" stroke-width="1.6" /><polygon points="552,665 557,662 571,662 571,695 552,695" fill="#d2d2d2" /><path d="M421.6,506.21024 L422.0,514.21024 L424.40000000000003,516.41024" fill="none" stroke="#c8c8dc" stroke-width="1.5" stroke-linecap="round"/><path d="M432.37,502.768148 L432.77,510.768148 L435.17,512.968148" fill="none" stroke="#c8c8dc" stroke-width="1.5" stroke-linecap="round"/><path d="M443.14,499.326056 L443.53999999999996,507.326056 L445.94,509.526056" fill="none" stroke="#c8c8dc" stroke-width="1.5" stroke-linecap="round"/><path d="M453.90999999999997,495.883964 L454.30999999999995,503.883964 L456.71,506.083964" fill="none" stroke="#c8c8dc" stroke-width="1.5" stroke-linecap="round"/><path d="M464.67999999999995,492.441872 L465.0799999999999,500.441872 L467.47999999999996,502.641872" fill="none" stroke="#c8c8dc" stroke-width="1.5" stroke-linecap="round"/><path d="M475.44999999999993,488.99978000000004 L475.8499999999999,496.99978000000004 L478.24999999999994,499.19978000000003" fill="none" stroke="#c8c8dc" stroke-width="1.5" stroke-linecap="round"/><path d="M486.2199999999999,485.55768800000004 L486.6199999999999,493.55768800000004 L489.0199999999999,495.75768800000003" fill="none" stroke="#c8c8dc" stroke-width="1.5" stroke-linecap="round"/><path d="M496.9899999999999,482.11559600000004 L497.3899999999999,490.11559600000004 L499.7899999999999,492.315596" fill="none" stroke="#c8c8dc" stroke-width="1.5" stroke-linecap="round"/><path d="M507.7599999999999,478.67350400000004 L508.15999999999985,486.67350400000004 L510.5599999999999,488.873504" fill="none" stroke="#c8c8dc" stroke-width="1.5" stroke-linecap="round"/><path d="M518.5299999999999,475.23141200000003 L518.9299999999998,483.23141200000003 L521.3299999999998,485.431412" fill="none" stroke="#c8c8dc" stroke-width="1.5" stroke-linecap="round"/><path d="M529.2999999999998,471.78932000000003 L529.6999999999998,479.78932000000003 L532.0999999999998,481.98932" fill="none" stroke="#c8c8dc" stroke-width="1.5" stroke-linecap="round"/><path d="M540.0699999999998,468.3472280000001 L540.4699999999998,476.3472280000001 L542.8699999999998,478.5472280000001" fill="none" stroke="#c8c8dc" stroke-width="1.5" stroke-linecap="round"/><path d="M550.8399999999998,464.9051360000001 L551.2399999999998,472.9051360000001 L553.6399999999998,475.1051360000001" fill="none" stroke="#c8c8dc" stroke-width="1.5" stroke-linecap="round"/><path d="M561.6099999999998,461.4630440000001 L562.0099999999998,469.4630440000001 L564.4099999999997,471.66304400000007" fill="none" stroke="#c8c8dc" stroke-width="1.5" stroke-linecap="round"/><path d="M572.3799999999998,458.0209520000001 L572.7799999999997,466.0209520000001 L575.1799999999997,468.22095200000007" fill="none" stroke="#c8c8dc" stroke-width="1.5" stroke-linecap="round"/><path d="M583.1499999999997,454.5788600000001 L583.5499999999997,462.5788600000001 L585.9499999999997,464.77886000000007" fill="none" stroke="#c8c8dc" stroke-width="1.5" stroke-linecap="round"/><path d="M593.9199999999997,451.1367680000001 L594.3199999999997,459.1367680000001 L596.7199999999997,461.33676800000006" fill="none" stroke="#c8c8dc" stroke-width="1.5" stroke-linecap="round"/><path d="M604.6899999999997,447.6946760000001 L605.0899999999997,455.6946760000001 L607.4899999999997,457.89467600000006" fill="none" stroke="#c8c8dc" stroke-width="1.5" stroke-linecap="round"/><path d="M615.4599999999997,444.25258400000007 L615.8599999999997,452.25258400000007 L618.2599999999996,454.45258400000006" fill="none" stroke="#c8c8dc" stroke-width="1.5" stroke-linecap="round"/><path d="M626.2299999999997,440.8104920000001 L626.6299999999997,448.8104920000001 L629.0299999999996,451.0104920000001" fill="none" stroke="#c8c8dc" stroke-width="1.5" stroke-linecap="round"/><path d="M636.9999999999997,437.3684000000001 L637.3999999999996,445.3684000000001 L639.7999999999996,447.5684000000001" fill="none" stroke="#c8c8dc" stroke-width="1.5" stroke-linecap="round"/><path d="M647.7699999999996,433.9263080000001 L648.1699999999996,441.9263080000001 L650.5699999999996,444.1263080000001" fill="none" stroke="#c8c8dc" stroke-width="1.5" stroke-linecap="round"/><path d="M658.5399999999996,430.4842160000001 L658.9399999999996,438.4842160000001 L661.3399999999996,440.6842160000001" fill="none" stroke="#c8c8dc" stroke-width="1.5" stroke-linecap="round"/><path d="M669.3099999999996,427.0421240000001 L669.7099999999996,435.0421240000001 L672.1099999999996,437.2421240000001" fill="none" stroke="#c8c8dc" stroke-width="1.5" stroke-linecap="round"/><path d="M680.0799999999996,423.6000320000001 L680.4799999999996,431.6000320000001 L682.8799999999995,433.8000320000001" fill="none" stroke="#c8c8dc" stroke-width="1.5" stroke-linecap="round"/><path d="M690.8499999999996,420.15794000000017 L691.2499999999995,428.15794000000017 L693.6499999999995,430.35794000000016" fill="none" stroke="#c8c8dc" stroke-width="1.5" stroke-linecap="round"/><path d="M701.6199999999995,416.71584800000016 L702.0199999999995,424.71584800000016 L704.4199999999995,426.91584800000015" fill="none" stroke="#c8c8dc" stroke-width="1.5" stroke-linecap="round"/><path d="M712.3899999999995,413.27375600000016 L712.7899999999995,421.27375600000016 L715.1899999999995,423.47375600000015" fill="none" stroke="#c8c8dc" stroke-width="1.5" stroke-linecap="round"/><path d="M723.1599999999995,409.83166400000016 L723.5599999999995,417.83166400000016 L725.9599999999995,420.03166400000015" fill="none" stroke="#c8c8dc" stroke-width="1.5" stroke-linecap="round"/><path d="M733.9299999999995,406.38957200000016 L734.3299999999995,414.38957200000016 L736.7299999999994,416.58957200000015" fill="none" stroke="#c8c8dc" stroke-width="1.5" stroke-linecap="round"/><path d="M744.6999999999995,402.94748000000016 L745.0999999999995,410.94748000000016 L747.4999999999994,413.14748000000014" fill="none" stroke="#c8c8dc" stroke-width="1.5" stroke-linecap="round"/><path d="M755.4699999999995,399.50538800000015 L755.8699999999994,407.50538800000015 L758.2699999999994,409.70538800000014" fill="none" stroke="#c8c8dc" stroke-width="1.5" stroke-linecap="round"/><path d="M766.2399999999994,396.06329600000015 L766.6399999999994,404.06329600000015 L769.0399999999994,406.26329600000014" fill="none" stroke="#c8c8dc" stroke-width="1.5" stroke-linecap="round"/><path d="M777.0099999999994,392.6212040000002 L777.4099999999994,400.6212040000002 L779.8099999999994,402.8212040000002" fill="none" stroke="#c8c8dc" stroke-width="1.5" stroke-linecap="round"/><path d="M787.7799999999994,389.1791120000002 L788.1799999999994,397.1791120000002 L790.5799999999994,399.3791120000002" fill="none" stroke="#c8c8dc" stroke-width="1.5" stroke-linecap="round"/><path d="M798.5499999999994,385.7370200000002 L798.9499999999994,393.7370200000002 L801.3499999999993,395.9370200000002" fill="none" stroke="#c8c8dc" stroke-width="1.5" stroke-linecap="round"/><path d="M809.3199999999994,382.2949280000002 L809.7199999999993,390.2949280000002 L812.1199999999993,392.4949280000002" fill="none" stroke="#c8c8dc" stroke-width="1.5" stroke-linecap="round"/><path d="M820.0899999999993,378.85283600000025 L820.4899999999993,386.85283600000025 L822.8899999999993,389.05283600000024" fill="none" stroke="#c8c8dc" stroke-width="1.5" stroke-linecap="round"/><path d="M524.5,555.0374 L524.9,563.0374 L527.3,565.2374000000001" fill="none" stroke="#9a9af4" stroke-width="1.5" stroke-linecap="round"/><path d="M535.17,551.746772 L535.5699999999999,559.746772 L537.9699999999999,561.946772" fill="none" stroke="#9a9af4" stroke-width="1.5" stroke-linecap="round"/><path d="M545.8399999999999,548.456144 L546.2399999999999,556.456144 L548.6399999999999,558.656144" fill="none" stroke="#9a9af4" stroke-width="1.5" stroke-linecap="round"/><path d="M556.5099999999999,545.165516 L556.9099999999999,553.165516 L559.3099999999998,555.3655160000001" fill="none" stroke="#9a9af4" stroke-width="1.5" stroke-linecap="round"/><path d="M567.1799999999998,541.874888 L567.5799999999998,549.874888 L569.9799999999998,552.0748880000001" fill="none" stroke="#9a9af4" stroke-width="1.5" stroke-linecap="round"/><path d="M577.8499999999998,538.5842600000001 L578.2499999999998,546.5842600000001 L580.6499999999997,548.7842600000001" fill="none" stroke="#9a9af4" stroke-width="1.5" stroke-linecap="round"/><path d="M588.5199999999998,535.2936320000001 L588.9199999999997,543.2936320000001 L591.3199999999997,545.4936320000002" fill="none" stroke="#9a9af4" stroke-width="1.5" stroke-linecap="round"/><path d="M599.1899999999997,532.0030040000001 L599.5899999999997,540.0030040000001 L601.9899999999997,542.2030040000002" fill="none" stroke="#9a9af4" stroke-width="1.5" stroke-linecap="round"/><path d="M609.8599999999997,528.7123760000001 L610.2599999999996,536.7123760000001 L612.6599999999996,538.9123760000001" fill="none" stroke="#9a9af4" stroke-width="1.5" stroke-linecap="round"/><path d="M620.5299999999996,525.4217480000001 L620.9299999999996,533.4217480000001 L623.3299999999996,535.6217480000001" fill="none" stroke="#9a9af4" stroke-width="1.5" stroke-linecap="round"/><path d="M631.1999999999996,522.1311200000001 L631.5999999999996,530.1311200000001 L633.9999999999995,532.3311200000002" fill="none" stroke="#9a9af4" stroke-width="1.5" stroke-linecap="round"/><path d="M641.8699999999995,518.8404920000002 L642.2699999999995,526.8404920000002 L644.6699999999995,529.0404920000002" fill="none" stroke="#9a9af4" stroke-width="1.5" stroke-linecap="round"/><path d="M652.5399999999995,515.5498640000002 L652.9399999999995,523.5498640000002 L655.3399999999995,525.7498640000002" fill="none" stroke="#9a9af4" stroke-width="1.5" stroke-linecap="round"/><path d="M663.2099999999995,512.2592360000002 L663.6099999999994,520.2592360000002 L666.0099999999994,522.4592360000003" fill="none" stroke="#9a9af4" stroke-width="1.5" stroke-linecap="round"/><path d="M673.8799999999994,508.96860800000013 L674.2799999999994,516.9686080000001 L676.6799999999994,519.1686080000002" fill="none" stroke="#9a9af4" stroke-width="1.5" stroke-linecap="round"/><path d="M684.5499999999994,505.67798000000016 L684.9499999999994,513.6779800000002 L687.3499999999993,515.8779800000002" fill="none" stroke="#9a9af4" stroke-width="1.5" stroke-linecap="round"/><path d="M695.2199999999993,502.3873520000002 L695.6199999999993,510.3873520000002 L698.0199999999993,512.5873520000002" fill="none" stroke="#9a9af4" stroke-width="1.5" stroke-linecap="round"/><path d="M705.8899999999993,499.0967240000002 L706.2899999999993,507.0967240000002 L708.6899999999993,509.2967240000002" fill="none" stroke="#9a9af4" stroke-width="1.5" stroke-linecap="round"/><path d="M716.5599999999993,495.80609600000025 L716.9599999999992,503.80609600000025 L719.3599999999992,506.00609600000024" fill="none" stroke="#9a9af4" stroke-width="1.5" stroke-linecap="round"/><path d="M727.2299999999992,492.5154680000002 L727.6299999999992,500.5154680000002 L730.0299999999992,502.7154680000002" fill="none" stroke="#9a9af4" stroke-width="1.5" stroke-linecap="round"/><path d="M737.8999999999992,489.22484000000026 L738.2999999999992,497.22484000000026 L740.6999999999991,499.42484000000024" fill="none" stroke="#9a9af4" stroke-width="1.5" stroke-linecap="round"/><path d="M748.5699999999991,485.93421200000023 L748.9699999999991,493.93421200000023 L751.3699999999991,496.1342120000002" fill="none" stroke="#9a9af4" stroke-width="1.5" stroke-linecap="round"/><path d="M759.2399999999991,482.64358400000026 L759.6399999999991,490.64358400000026 L762.039999999999,492.84358400000025" fill="none" stroke="#9a9af4" stroke-width="1.5" stroke-linecap="round"/><path d="M769.9099999999991,479.3529560000003 L770.309999999999,487.3529560000003 L772.709999999999,489.5529560000003" fill="none" stroke="#9a9af4" stroke-width="1.5" stroke-linecap="round"/><path d="M780.579999999999,476.0623280000003 L780.979999999999,484.0623280000003 L783.379999999999,486.2623280000003" fill="none" stroke="#9a9af4" stroke-width="1.5" stroke-linecap="round"/><path d="M791.249999999999,472.7717000000003 L791.649999999999,480.7717000000003 L794.0499999999989,482.9717000000003" fill="none" stroke="#9a9af4" stroke-width="1.5" stroke-linecap="round"/><path d="M801.9199999999989,469.4810720000003 L802.3199999999989,477.4810720000003 L804.7199999999989,479.6810720000003" fill="none" stroke="#9a9af4" stroke-width="1.5" stroke-linecap="round"/><path d="M812.5899999999989,466.19044400000035 L812.9899999999989,474.19044400000035 L815.3899999999988,476.39044400000034" fill="none" stroke="#9a9af4" stroke-width="1.5" stroke-linecap="round"/><path d="M823.2599999999989,462.8998160000003 L823.6599999999988,470.8998160000003 L826.0599999999988,473.0998160000003" fill="none" stroke="#9a9af4" stroke-width="1.5" stroke-linecap="round"/><path d="M833.9299999999988,459.60918800000036 L834.3299999999988,467.60918800000036 L836.7299999999988,469.80918800000035" fill="none" stroke="#9a9af4" stroke-width="1.5" stroke-linecap="round"/><path d="M844.5999999999988,456.3185600000004 L844.9999999999987,464.3185600000004 L847.3999999999987,466.5185600000004" fill="none" stroke="#9a9af4" stroke-width="1.5" stroke-linecap="round"/><path d="M855.2699999999987,453.0279320000004 L855.6699999999987,461.0279320000004 L858.0699999999987,463.2279320000004" fill="none" stroke="#9a9af4" stroke-width="1.5" stroke-linecap="round"/><path d="M865.9399999999987,449.7373040000004 L866.3399999999987,457.7373040000004 L868.7399999999986,459.9373040000004" fill="none" stroke="#9a9af4" stroke-width="1.5" stroke-linecap="round"/><path d="M876.6099999999986,446.4466760000004 L877.0099999999986,454.4466760000004 L879.4099999999986,456.6466760000004" fill="none" stroke="#9a9af4" stroke-width="1.5" stroke-linecap="round"/><path d="M887.2799999999986,443.1560480000004 L887.6799999999986,451.1560480000004 L890.0799999999986,453.3560480000004" fill="none" stroke="#9a9af4" stroke-width="1.5" stroke-linecap="round"/><path d="M897.9499999999986,439.8654200000004 L898.3499999999985,447.8654200000004 L900.7499999999985,450.0654200000004" fill="none" stroke="#9a9af4" stroke-width="1.5" stroke-linecap="round"/><path d="M908.6199999999985,436.57479200000046 L909.0199999999985,444.57479200000046 L911.4199999999985,446.77479200000045" fill="none" stroke="#9a9af4" stroke-width="1.5" stroke-linecap="round"/><path d="M919.2899999999985,433.2841640000005 L919.6899999999985,441.2841640000005 L922.0899999999984,443.4841640000005" fill="none" stroke="#9a9af4" stroke-width="1.5" stroke-linecap="round"/><path d="M929.9599999999984,429.99353600000046 L930.3599999999984,437.99353600000046 L932.7599999999984,440.19353600000045" fill="none" stroke="#9a9af4" stroke-width="1.5" stroke-linecap="round"/><polygon points="610.6,447 614.6,444 635.1,445 635.1,461 628.1,462 628.1,474 635.1,475 635.1,478 630.1,481 611.6,481 611.6,474 614.6,473 614.6,462 610.6,461" fill="#6e22b0" /><polygon points="621.625,445 635.1,445 635.1,461 621.625,462" fill="#62189e" /><polygon points="680.5,424.7 684.5,421.7 705.0,422.7 705.0,438.7 698.0,439.7 698.0,451.7 705.0,452.7 705.0,455.7 700.0,458.7 681.5,458.7 681.5,451.7 684.5,450.7 684.5,439.7 680.5,438.7" fill="#6e22b0" /><polygon points="691.525,422.7 705.0,422.7 705.0,438.7 691.525,439.7" fill="#62189e" /><polygon points="744.5,404.6 748.5,401.6 768.0,402.6 768.0,418.6 761.0,419.6 761.0,431.6 768.0,432.6 768.0,435.6 763.0,438.6 745.5,438.6 745.5,431.6 748.5,430.6 748.5,419.6 744.5,418.6" fill="#6e22b0" /><polygon points="755.075,402.6 768.0,402.6 768.0,418.6 755.075,419.6" fill="#62189e" /><polygon points="503.7,462.7 512.2,462.7 512.2,484.7 503.7,484.7" fill="#1a2ad0" /><polygon points="572,441 580.5,441 580.5,463 572,463" fill="#1a2ad0" /><polygon points="650.6,416.4 659.1,416.4 659.1,438.4 650.6,438.4" fill="#1a2ad0" /><polygon points="703,400 711.5,400 711.5,422 703,422" fill="#1a2ad0" /><polygon points="748,385 756.5,385 756.5,407 748,407" fill="#1a2ad0" /><polygon points="778,376 786.5,376 786.5,398 778,398" fill="#1a2ad0" /><line x1="524.5" y1="598" x2="524.5" y2="694" stroke="#2432c8" stroke-width="2" /><polygon points="524.5,597 528,613 521,613" fill="none" stroke="#3040e0" stroke-width="1.2"/><line x1="524" y1="701" x2="598" y2="680" stroke="#c03030" stroke-width="1.2" /><polygon points="580,681 592,676 601,679 598,686 586,690" fill="#d82020" /><line x1="521" y1="698" x2="468" y2="674" stroke="#30b030" stroke-width="1.4" /><polygon points="466,672 474,669 485,675 483,682 475,683" fill="#38d038" /><line x1="371.5" y1="661.7" x2="488" y2="719" stroke="#bcbcbc" stroke-width="1.3" /><line x1="476" y1="722" x2="517" y2="707.5" stroke="#bcbcbc" stroke-width="1.3" /><line x1="485" y1="717.5" x2="495" y2="722.5" stroke="#bcbcbc" stroke-width="1.1" /><path d="M366,660 a4,3 0 1 0 8,0 a4,3 0 1 0 -8,0 M374,660 L384,656" fill="none" stroke="#e0e0e0" stroke-width="1.3"/><g fill="none" stroke="#e8e8e8" stroke-width="1.2"><path d="M512,704 L525,697 L538,702 L525,709 Z M518.5,700.5 L531.5,705.5 M531.5,699.5 L518.5,706.5"/></g><text x="521" y="582" fill="#d8d8e8" font-family="Liberation Sans" font-size="12">Z</text><text x="448" y="672" fill="#d8d8e8" font-family="Liberation Sans" font-size="12">Y</text><text x="611" y="679" fill="#d8d8d8" font-family="Liberation Sans" font-size="12">X</text><path d="M1088,527 a3,2.5 0 1 0 6,0 a3,2.5 0 1 0 -6,0 M1094,527 L1104,524" fill="none" stroke="#d8d8d8" stroke-width="1.1"/><g fill="none" stroke="#5c5c5c" stroke-width="1"><ellipse cx="1102" cy="152.8" rx="70.5" ry="80.7"/><ellipse cx="1102" cy="153.2" rx="46.6" ry="53.2"/><path d="M1031.5,153 H1172.5 M1102,72 V233.5"/></g><ellipse cx="1079.5" cy="185.5" rx="4.6" ry="5.2" fill="#8e6a48"/></g></svg></div>
<div class="a" style="left:288px;top:61.6px;width:18.69999999999999px;height:12.800000000000004px;background:#1c1c1c;border-radius:7px;"></div>
<div class="a" style="left:310px;top:61.6px;width:102.60000000000002px;height:12.800000000000004px;background:#1c1c1c;border-radius:7px;"></div>
<div class="a" style="left:417px;top:61.6px;width:48px;height:12.800000000000004px;background:#1c1c1c;border-radius:7px;"></div>
<div class="a" style="left:468px;top:61.6px;width:113px;height:12.800000000000004px;background:#1c1c1c;border-radius:7px;"></div>
<div class="t" style="left:294.5px;top:62.5px;font-size:9px;color:#6a6a6a">+</div>
<svg style="left:6px;top:4px" width="22" height="28"><defs><linearGradient id="lg" x1="0" y1="0" x2="0.3" y2="1"><stop offset="0" stop-color="#48d2f2"/><stop offset="1" stop-color="#2a9ee0"/></linearGradient></defs>
<path d="M8,1.5 H20.5 V17 C20.5,23 17,26.5 11,26.5 H1.5 V9 C1.5,4.5 4,1.5 8,1.5 Z" fill="url(#lg)" stroke="#2a8fc0" stroke-width="0.8"/>
<path d="M8.7,4 V26" stroke="#1f7fae" stroke-width="0.9"/><ellipse cx="10.4" cy="13.8" rx="1.3" ry="2" fill="#bfe8f8"/></svg>
<svg style="left:39px;top:5px" width="11" height="15"><path d="M0.5,0.5 H6.5 L9.8,3.8 V14.2 H0.5 Z" fill="#f8f8f8" stroke="#7c7c7c" stroke-width="0.9"/><path d="M6.5,0.5 V3.8 H9.8" fill="none" stroke="#7c7c7c" stroke-width="0.8"/></svg>
<svg style="left:54.5px;top:6.5px" width="14" height="12"><path d="M0.8,10.8 V1 H5 L6.3,2.5 H11 V5" fill="#8a8f90" stroke="#6a6e70" stroke-width="0.9"/><path d="M0.8,10.8 L3.2,5 H13.2 L10.8,10.8 Z" fill="#bfe0f0" stroke="#6a7a80" stroke-width="0.9"/></svg>
<svg style="left:72.7px;top:5px" width="13" height="15"><rect x="0.6" y="0.6" width="11.6" height="13.6" rx="1" fill="#5d7088"/><rect x="2.5" y="1" width="7.5" height="4.8" fill="#e6eef2"/><rect x="6.8" y="1.8" width="1.6" height="3" fill="#5d7088"/><rect x="2.3" y="8" width="8.3" height="6.2" fill="#cfdfe8"/></svg>
<svg style="left:91px;top:5px" width="13" height="15"><rect x="0.6" y="0.6" width="11.6" height="13.6" rx="1" fill="#6a7070"/><rect x="2" y="2.5" width="9" height="10.5" fill="#efe3b8"/><path d="M3.5,8 L5.5,10 L9.5,5" fill="none" stroke="#506070" stroke-width="1.2"/><rect x="4" y="0.6" width="4" height="2.5" fill="#e8e8e8"/></svg>
<svg style="left:109px;top:7.5px" width="14" height="11"><path d="M5,0.8 L0.8,4.8 L5,8.8 V6.3 C8.5,6 11,7 12.8,10.2 C12.8,5.5 9.8,3.2 5,3.2 Z" fill="#8cc4e8" stroke="#3e7eb8" stroke-width="1"/></svg>
<svg style="left:127px;top:11px" width="4" height="3"><polygon points="0,0 4,0 2,2.5" fill="#8a8a8a"/></svg>
<svg style="left:135px;top:7px" width="14" height="12"><path d="M9,0.8 L13.2,5 L9,9.2 V6.5 C5.5,6.3 3,7.3 1.2,10.8 C1.2,5.8 4.2,3.3 9,3.3 Z" fill="#fbfbfb" stroke="#f2f2f2" stroke-width="1"/></svg>
<svg style="left:153.5px;top:11px" width="4" height="3"><polygon points="0,0 4,0 2,2.5" fill="#8a8a8a"/></svg>
<svg style="left:161.5px;top:7px" width="14" height="14"><rect x="3" y="0.5" width="8" height="5" fill="#f4f8fa" stroke="#8aa0a8" stroke-width="0.8"/><rect x="0.5" y="5" width="13" height="5" rx="1" fill="#9fc7c0" stroke="#7a9aa0" stroke-width="0.8"/><rect x="2.5" y="9.5" width="9" height="4" fill="#dfe8f0" stroke="#a8b8c8" stroke-width="0.8"/></svg>
<svg style="left:190px;top:10px" width="5" height="7"><path d="M0.5,0.8 H4.5 M0.5,2.5 L2.5,5.5 L4.5,2.5 Z" fill="#666" stroke="#666" stroke-width="0.8"/></svg>
<svg style="left:1306px;top:2px" width="15" height="15"><rect x="0.8" y="1.5" width="13" height="12.5" fill="#eef3f8" stroke="#6a7280" stroke-width="1.2"/><rect x="1.5" y="1.5" width="11.5" height="3.2" fill="#3d88d8"/><path d="M5.5,5 V14" stroke="#6a7280" stroke-width="1"/></svg>
<div class="t" style="left:1327.5px;top:4px;font-size:11px;color:#6a6a6a">?</div>
<svg style="left:1342px;top:7px" width="3" height="3"><circle cx="1.5" cy="1.5" r="1.2" fill="#f2f2f2"/></svg>
<div class="a" style="left:1370.5px;top:9px;width:8px;height:1.2px;background:#444;"></div>
<svg style="left:1403px;top:4.5px" width="10" height="10"><path d="M3,2.5 V0.8 H9.2 V7 H7.5" fill="none" stroke="#444" stroke-width="1.1"/><rect x="0.8" y="2.8" width="6.6" height="6.4" fill="none" stroke="#444" stroke-width="1.1"/></svg>
<svg style="left:1438.5px;top:4.5px" width="9" height="9"><path d="M0.5,0.5 L8.5,8.5 M8.5,0.5 L0.5,8.5" stroke="#fff" stroke-width="1.3"/></svg>
<svg style="left:10.5px;top:65px" width="19" height="19"><path d="M0.7,14.5 V0.8 H5.5 L7,2.8 H13 V14.5 Z" fill="#f8fafa" stroke="#6f8288" stroke-width="1"/><path d="M0.7,4 H13" stroke="#6f8288" stroke-width="0.8"/><rect x="9.3" y="9" width="8" height="9.3" fill="#f9d490" stroke="#e6a23a" stroke-width="0.9"/><circle cx="13.3" cy="13.6" r="1.6" fill="#e88b1a"/></svg>
<svg style="left:31.5px;top:64px" width="18" height="17"><path d="M0.7,15.5 V0.8 H5.5 L7,2.8 H13 V5.5" fill="#f8fafa" stroke="#6f8b98" stroke-width="1"/><path d="M0.7,15.5 L3.5,6 H16.8 L13.5,15.5 Z" fill="#f2f8fb" stroke="#6f8b98" stroke-width="1"/></svg>
<svg style="left:51px;top:70.5px" width="6" height="4"><polygon points="0,0 6,0 3,3.8" fill="#222"/></svg>
<svg style="left:59.5px;top:65px" width="19" height="19"><path d="M0.7,14.5 V0.8 H5.5 L7,2.8 H13 V14.5 Z" fill="#f8fafa" stroke="#6f8288" stroke-width="1"/><path d="M0.7,4 H13" stroke="#6f8288" stroke-width="0.8"/><rect x="8.3" y="9" width="8.2" height="9.3" fill="#f8e4e4" stroke="#d08080" stroke-width="0.9"/><path d="M10.5,11.5 L14.3,15.8 M14.3,11.5 L10.5,15.8" stroke="#b04040" stroke-width="1"/></svg>
<svg style="left:283px;top:833.5px" width="14" height="15"><rect x="0.6" y="0.6" width="12.8" height="13.8" fill="#eef4fa" stroke="#8898a8" stroke-width="1"/><rect x="1.2" y="3" width="11.6" height="2.2" fill="#6a9ad0"/><path d="M1,9 H13" stroke="#9aaabb" stroke-width="0.8"/></svg>
<svg style="left:1176.5px;top:45px" width="7" height="4"><polygon points="0,0 7,0 3.5,4" fill="#7a7a7a"/></svg>
<svg style="left:600.5px;top:44.5px" width="8" height="8"><path d="M0.5,0.5 L7.5,7.5 M7.5,0.5 L0.5,7.5" stroke="#555" stroke-width="1"/></svg>
<div class="t" style="left:482.0px;top:4.3px;font-size:10px;color:#1e1e1e;transform:scaleX(0.895);">Платформа nanoCAD x64 23 - не для коммерческого использования Насосная станция/Сводный 3D вид систем вентиляции*</div>
<div class="t" style="left:45.0px;top:26.7px;font-size:9.2px;color:#262626;-webkit-text-stroke:0.45px currentColor;transform:scaleX(0.887);">Главная</div>
<div class="t" style="left:99.0px;top:26.7px;font-size:9.2px;color:#262626;-webkit-text-stroke:0.45px currentColor;transform:scaleX(0.948);">Построение</div>
<div class="t" style="left:170.0px;top:26.7px;font-size:9.2px;color:#262626;-webkit-text-stroke:0.45px currentColor;transform:scaleX(0.878);">Вставка</div>
<div class="t" style="left:223.0px;top:26.7px;font-size:9.2px;color:#262626;-webkit-text-stroke:0.45px currentColor;transform:scaleX(0.947);">Оформление</div>
<div class="t" style="left:300.0px;top:26.7px;font-size:9.2px;color:#262626;-webkit-text-stroke:0.45px currentColor;transform:scaleX(0.915);">Зависимости</div>
<div class="t" style="left:376.0px;top:26.7px;font-size:9.2px;color:#262626;-webkit-text-stroke:0.45px currentColor;transform:scaleX(0.935);">3D-инструменты</div>
<div class="t" style="left:464.5px;top:26.7px;font-size:9.2px;color:#262626;-webkit-text-stroke:0.45px currentColor;transform:scaleX(0.842);">Вид</div>
<div class="t" style="left:500.5px;top:26.7px;font-size:9.2px;color:#262626;-webkit-text-stroke:0.45px currentColor;transform:scaleX(0.965);">Настройки</div>
<div class="t" style="left:566.0px;top:26.7px;font-size:9.2px;color:#262626;-webkit-text-stroke:0.45px currentColor;transform:scaleX(0.900);">Вывод</div>
<div class="t" style="left:612.0px;top:26.7px;font-size:9.2px;color:#262626;-webkit-text-stroke:0.45px currentColor;transform:scaleX(0.865);">Растр</div>
<div class="t" style="left:655.5px;top:26.7px;font-size:9.2px;color:#262626;-webkit-text-stroke:0.45px currentColor;transform:scaleX(0.969);">Облака точек</div>
<div class="t" style="left:733.5px;top:26.7px;font-size:9.2px;color:#262626;-webkit-text-stroke:0.45px currentColor;">Топоплан</div>
<div class="t" style="left:796.5px;top:26.7px;font-size:9.2px;color:#262626;-webkit-text-stroke:0.45px currentColor;transform:scaleX(0.915);">Вентиляция</div>
<div class="t" style="left:4.0px;top:42.3px;font-size:10px;color:#5a5a5a;transform:scaleX(0.887);">Менеджер проекта</div>
<div class="t" style="left:13.0px;top:111.3px;font-size:10px;color:#8a8a8a;font-style:italic;transform:scaleX(0.872);">Поиск</div>
<div class="t" style="left:10.3px;top:91.8px;font-size:10px;color:#2b2b2b;transform:scaleX(0.880);">Проект</div>
<div class="t" style="left:10.5px;top:465.3px;font-size:10px;color:#2b2b2b;transform:scaleX(0.891);">Структура компонента</div>
<div class="t" style="left:13.1px;top:484.3px;font-size:10px;color:#8a8a8a;font-style:italic;transform:scaleX(0.872);">Поиск</div>
<div class="t" style="left:297.4px;top:43.3px;font-size:10px;color:#2b2b2b;transform:scaleX(0.847);">Без имени0*</div>
<div class="t" style="left:364.2px;top:43.3px;font-size:10px;color:#2b2b2b;transform:scaleX(0.857);">Насосная станция/Сводный 3D вид систем вентиляции*</div>
<div class="t" style="left:315.6px;top:835.8px;font-size:10px;color:#2b2b2b;transform:scaleX(0.874);">Модель</div>
<div class="t" style="left:358.2px;top:835.8px;font-size:10px;color:#2b2b2b;transform:scaleX(0.843);">Лист1</div>
<div class="t" style="left:393.0px;top:835.8px;font-size:10px;color:#2b2b2b;transform:scaleX(0.828);">Лист2</div>
<div class="t" style="left:1194.6px;top:42.0px;font-size:10px;color:#5a5a5a;transform:scaleX(0.822);">BIM Свойства</div>
<div class="t" style="left:1205.4px;top:70.8px;font-size:10px;color:#8a8a8a;font-style:italic;transform:scaleX(0.872);">Поиск</div>
<div class="t" style="left:8.5px;top:837.3px;font-size:10px;color:#2b2b2b;transform:scaleX(0.868);">Изменения</div>
<div class="t" style="left:64.8px;top:837.3px;font-size:10px;color:#2b2b2b;transform:scaleX(0.893);">Менеджер проекта</div>
<div class="t" style="left:154.6px;top:837.3px;font-size:10px;color:#2b2b2b;transform:scaleX(0.873);">История 3D Построений</div>
<div class="t" style="left:10.6px;top:859.8px;font-size:10px;color:#2b2b2b;transform:scaleX(0.864);">Командная строка</div>
<div class="t" style="left:1198.8px;top:837.3px;font-size:10px;color:#2b2b2b;transform:scaleX(0.822);">BIM Свойства</div>
<div class="t" style="left:1263.5px;top:837.3px;font-size:10px;color:#2b2b2b;transform:scaleX(0.826);">Свойства</div>
<div class="t" style="left:29.1px;top:136.0px;font-size:10px;color:#2b2b2b;transform:scaleX(0.864);">Быстрый старт</div>
<div class="t" style="left:51.4px;top:153.4px;font-size:10px;color:#2b2b2b;transform:scaleX(0.909);">Компоненты</div>
<div class="t" style="left:62.1px;top:170.3px;font-size:10px;color:#2b2b2b;transform:scaleX(0.890);">Проектные</div>
<div class="t" style="left:72.8px;top:187.4px;font-size:10px;color:#1e1e1e;transform:scaleX(0.867);">Насосная станция</div>
<div class="t" style="left:83.4px;top:204.9px;font-size:10px;color:#2b2b2b;transform:scaleX(0.867);">2D вид</div>
<div class="t" style="left:83.4px;top:221.7px;font-size:10px;color:#2b2b2b;transform:scaleX(0.867);">3D вид</div>
<div class="t" style="left:83.4px;top:238.8px;font-size:10px;color:#2b2b2b;transform:scaleX(0.887);">Сводный 3D вид систем вентиляции</div>
<div class="t" style="left:83.4px;top:256.3px;font-size:10px;color:#2b2b2b;transform:scaleX(0.869);">Спецификация</div>
<div class="t" style="left:72.8px;top:273.8px;font-size:10px;color:#2b2b2b;transform:scaleX(0.835);">Системы</div>
<div class="t" style="left:83.5px;top:291.4px;font-size:10px;color:#2b2b2b;transform:scaleX(0.772);">АВ1</div>
<div class="t" style="left:83.5px;top:308.4px;font-size:10px;color:#2b2b2b;transform:scaleX(0.772);">АВ2</div>
<div class="t" style="left:83.5px;top:325.5px;font-size:10px;color:#2b2b2b;transform:scaleX(0.772);">АВ3</div>
<div class="t" style="left:83.5px;top:342.7px;font-size:10px;color:#2b2b2b;transform:scaleX(0.772);">АВ4</div>
<div class="t" style="left:83.5px;top:359.7px;font-size:10px;color:#2b2b2b;transform:scaleX(0.772);">АВ5</div>
<div class="t" style="left:83.5px;top:377.1px;font-size:10px;color:#2b2b2b;transform:scaleX(0.695);">В1</div>
<div class="t" style="left:83.5px;top:394.5px;font-size:10px;color:#2b2b2b;transform:scaleX(0.695);">В2</div>
<div class="t" style="left:83.5px;top:411.7px;font-size:10px;color:#2b2b2b;transform:scaleX(0.740);">ВЕ1</div>
<div class="t" style="left:83.5px;top:429.1px;font-size:10px;color:#2b2b2b;transform:scaleX(0.740);">ВЕ2</div>
<div class="t" style="left:29.2px;top:509.5px;font-size:10px;color:#1e1e1e;transform:scaleX(0.870);">Насосная станция</div>
<div class="t" style="left:39.7px;top:526.6px;font-size:10px;color:#2b2b2b;transform:scaleX(0.850);">100x100x5</div>
<div class="t" style="left:39.7px;top:543.8px;font-size:10px;color:#2b2b2b;transform:scaleX(0.850);">100x100x5</div>
<div class="t" style="left:39.7px;top:561.1px;font-size:10px;color:#2b2b2b;transform:scaleX(0.882);">Отвод Ду315 90гр</div>
<div class="t" style="left:39.7px;top:578.1px;font-size:10px;color:#2b2b2b;transform:scaleX(0.856);">Отверстие</div>
<div class="t" style="left:39.7px;top:595.6px;font-size:10px;color:#2b2b2b;transform:scaleX(0.856);">Отверстие</div>
<div class="t" style="left:39.7px;top:612.9px;font-size:10px;color:#2b2b2b;transform:scaleX(0.850);">100x100x5</div>
<div class="t" style="left:39.7px;top:629.8px;font-size:10px;color:#2b2b2b;transform:scaleX(0.831);">35К1</div>
<div class="t" style="left:39.7px;top:647.0px;font-size:10px;color:#2b2b2b;transform:scaleX(0.850);">100x100x5</div>
<div class="t" style="left:39.7px;top:664.0px;font-size:10px;color:#2b2b2b;transform:scaleX(0.846);">20П</div>
<div class="t" style="left:39.7px;top:681.3px;font-size:10px;color:#2b2b2b;transform:scaleX(0.858);">26Ш2</div>
<div class="t" style="left:39.7px;top:699.1px;font-size:10px;color:#2b2b2b;transform:scaleX(0.890);">Стойка 159х6 с базой (поворотная)</div>
<div class="t" style="left:39.7px;top:716.1px;font-size:10px;color:#2b2b2b;transform:scaleX(0.900);">Узел 01. Колонна (крайняя)-Ригель-Прогон</div>
<div class="t" style="left:39.7px;top:733.1px;font-size:10px;color:#2b2b2b;transform:scaleX(0.831);">35К1</div>
<div class="t" style="left:39.7px;top:750.1px;font-size:10px;color:#2b2b2b;transform:scaleX(0.893);">База колонны с 4-мя анкерными болтами для стойк</div>
<div class="t" style="left:39.7px;top:767.5px;font-size:10px;color:#2b2b2b;transform:scaleX(0.887);">ДСН ЛКН 2100-1210 М3</div>
<div class="t" style="left:39.7px;top:784.5px;font-size:10px;color:#2b2b2b;transform:scaleX(0.887);">ДСН ЛКН 2100-1210 М3</div>
<div class="t" style="left:1210.9px;top:97.2px;font-size:10px;color:#1e1e1e;font-weight:bold;transform:scaleX(0.886);">Наименование</div>
<div class="t" style="left:1215.2px;top:115.8px;font-size:10px;color:#3a3a3a;transform:scaleX(0.864);">Наименова...</div>
<div class="t" style="left:1319.2px;top:115.8px;font-size:10px;color:#2b2b2b;transform:scaleX(0.874);">Насосная станция</div>
<div class="t" style="left:1215.2px;top:135.3px;font-size:10px;color:#3a3a3a;transform:scaleX(0.898);">ID компоне...</div>
<div class="t" style="left:1319.2px;top:135.3px;font-size:10px;color:#8a8a8a;transform:scaleX(0.892);">ff1c93f6-8622-47a4-8ce1-6dac898</div>
<div class="t" style="left:1210.9px;top:154.0px;font-size:10px;color:#1e1e1e;font-weight:bold;transform:scaleX(0.888);">Категоризация</div>
<div class="t" style="left:1215.2px;top:171.6px;font-size:10px;color:#3a3a3a;transform:scaleX(0.866);">Тип компон...</div>
<div class="t" style="left:1319.2px;top:171.6px;font-size:10px;color:#2b2b2b;transform:scaleX(0.917);">Проектный</div>
<div class="t" style="left:1210.9px;top:189.8px;font-size:10px;color:#1e1e1e;font-weight:bold;transform:scaleX(0.886);">Система координат модели</div>
<div class="t" style="left:1215.2px;top:207.3px;font-size:10px;color:#3a3a3a;transform:scaleX(0.889);">Координаты...</div>
<div class="t" style="left:1319.2px;top:207.3px;font-size:10px;color:#8a8a8a;transform:scaleX(0.867);">Координаты (X: 0, Y: 0, Z: 0), Пово</div>
<div class="t" style="left:1210.9px;top:224.7px;font-size:10px;color:#1e1e1e;font-weight:bold;transform:scaleX(0.880);">Мосгосэкспертиза</div>
<div class="t" style="left:1215.2px;top:243.7px;font-size:10px;color:#3a3a3a;transform:scaleX(0.824);">MGE_Project...</div>
<div class="t" style="left:1319.2px;top:243.7px;font-size:10px;color:#2b2b2b;transform:scaleX(0.894);">Застройщик ТСМ</div>
<div class="t" style="left:1215.2px;top:265.0px;font-size:10px;color:#3a3a3a;transform:scaleX(0.838);">MGE_Buildin...</div>
<div class="t" style="left:1319.2px;top:265.0px;font-size:10px;color:#2b2b2b;transform:scaleX(0.896);">Самарская обл. г.Тольятти Автоз</div>
<div class="t" style="left:1215.2px;top:286.4px;font-size:10px;color:#3a3a3a;transform:scaleX(0.841);">MGE_Designer</div>
<div class="t" style="left:1319.2px;top:286.4px;font-size:10px;color:#2b2b2b;transform:scaleX(0.883);">СпецСтрой</div>
<div class="t" style="left:1215.2px;top:307.7px;font-size:10px;color:#3a3a3a;transform:scaleX(0.818);">MGE_CodeO...</div>
<div class="t" style="left:1319.2px;top:307.7px;font-size:10px;color:#2b2b2b;transform:scaleX(0.844);">ОВ</div>
<div class="t" style="left:1215.2px;top:329.1px;font-size:10px;color:#3a3a3a;transform:scaleX(0.852);">MGE_Object...</div>
<div class="t" style="left:1319.2px;top:329.1px;font-size:10px;color:#2b2b2b;transform:scaleX(0.882);">Насосная станция</div>
<div class="t" style="left:1215.2px;top:350.4px;font-size:10px;color:#3a3a3a;transform:scaleX(0.838);">MGE_Elevati...</div>
<div class="t" style="left:1319.2px;top:350.4px;font-size:10px;color:#2b2b2b;transform:scaleX(0.863);">18237</div>
<div class="t" style="left:1215.2px;top:371.8px;font-size:10px;color:#3a3a3a;transform:scaleX(0.828);">MGE_Custo...</div>
<div class="t" style="left:1319.2px;top:371.8px;font-size:10px;color:#2b2b2b;transform:scaleX(0.898);">Администрация города Тольятти</div>
<div class="t" style="left:1215.2px;top:393.1px;font-size:10px;color:#3a3a3a;transform:scaleX(0.835);">MGE_Battery...</div>
<div class="t" style="left:1319.2px;top:393.1px;font-size:10px;color:#2b2b2b;transform:scaleX(0.911);">Корпус</div>
<div class="t" style="left:1215.2px;top:414.5px;font-size:10px;color:#3a3a3a;transform:scaleX(0.856);">MGE_NumOf...</div>
<div class="t" style="left:1319.2px;top:414.5px;font-size:10px;color:#2b2b2b;transform:scaleX(0.629);">1</div>
<div class="t" style="left:1215.2px;top:435.8px;font-size:10px;color:#3a3a3a;transform:scaleX(0.827);">MGE_Section</div>
<div class="t" style="left:1215.2px;top:457.2px;font-size:10px;color:#3a3a3a;transform:scaleX(0.833);">MGE_Korpus</div>
<div class="t" style="left:1319.2px;top:457.2px;font-size:10px;color:#2b2b2b;transform:scaleX(0.882);">Насосная станция</div>
<div class="t" style="left:1215.2px;top:478.5px;font-size:10px;color:#3a3a3a;transform:scaleX(0.824);">MGE_Project...</div>
<div class="t" style="left:1319.2px;top:478.5px;font-size:10px;color:#2b2b2b;transform:scaleX(0.870);">34.28.2022-ОВ</div>
<div class="t" style="left:316.5px;top:63.3px;font-size:10px;color:#5a5a5a;transform:scaleX(0.858);">Пользовательский вид</div>
<div class="t" style="left:423.0px;top:63.3px;font-size:10px;color:#5a5a5a;transform:scaleX(0.840);">Быстрый</div>
<div class="t" style="left:475.0px;top:63.3px;font-size:10px;color:#5a5a5a;transform:scaleX(0.842);">-- нет связанных видов --</div>
</div></body></html>
